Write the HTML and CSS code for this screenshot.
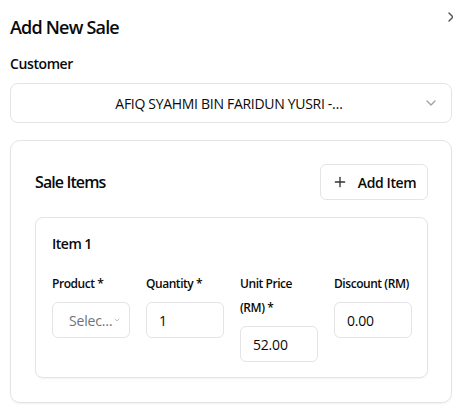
FILE: index.html
```html
<!DOCTYPE html>
<html>
<head>
<meta charset="utf-8">
<link rel="stylesheet" href="styles.css">
</head>
<body>
<div class="dialog">
  <button class="close" aria-label="Close">
    <svg width="16" height="16" viewBox="0 0 24 24" fill="none" stroke="currentColor" stroke-width="2" stroke-linecap="round" stroke-linejoin="round"><path d="M18 6 6 18"/><path d="m6 6 12 12"/></svg>
  </button>
  <h2 class="title">Add New Sale</h2>
  <div class="field">
    <label class="label">Customer</label>
    <div class="select customer">
      <span class="select-value">AFIQ SYAHMI BIN FARIDUN YUSRI -…</span>
      <svg class="chev" width="16" height="16" viewBox="0 0 24 24" fill="none" stroke="currentColor" stroke-width="2" stroke-linecap="round" stroke-linejoin="round"><path d="m6 9 6 6 6-6"/></svg>
    </div>
  </div>
  <div class="card">
    <div class="card-head">
      <h3 class="card-title">Sale Items</h3>
      <button class="btn">
        <svg width="16" height="16" viewBox="0 0 24 24" fill="none" stroke="currentColor" stroke-width="2" stroke-linecap="round" stroke-linejoin="round"><path d="M5 12h14"/><path d="M12 5v14"/></svg>
        <span>Add Item</span>
      </button>
    </div>
    <div class="item">
      <h4 class="item-title">Item 1</h4>
      <div class="grid">
        <div class="col">
          <label class="flabel">Product *</label>
          <div class="input small-select">
            <span class="ph">Selec…</span>
            <svg class="mini-chev" width="8" height="8" viewBox="0 0 24 24" fill="none" stroke="currentColor" stroke-width="2" stroke-linecap="round" stroke-linejoin="round"><path d="m6 9 6 6 6-6"/></svg>
          </div>
        </div>
        <div class="col">
          <label class="flabel">Quantity *</label>
          <div class="input">1</div>
        </div>
        <div class="col">
          <label class="flabel">Unit Price (RM) *</label>
          <div class="input">52.00</div>
        </div>
        <div class="col">
          <label class="flabel nowrap">Discount (RM)</label>
          <div class="input">0.00</div>
        </div>
      </div>
    </div>
  </div>
</div>
</body>
</html>
```

FILE: styles.css
```css
* { box-sizing: border-box; }
html, body { margin: 0; padding: 0; background: #fff; overflow: hidden; }
body {
  font-family: "Open Sans", "Noto Sans", sans-serif;
  color: #0a0a0a;
  width: 453px;
  height: 405px;
}
.dialog {
  position: relative;
  padding: 13px 0 0 10px;
  width: 452px;
}
.close {
  position: absolute;
  left: 445px;
  top: 9px;
  border: 0;
  padding: 0;
  background: none;
  color: #555;
  width: 16px;
  height: 16px;
  display: block;
}
.close svg { display: block; }
.title {
  margin: 0;
  font-size: 18px;
  line-height: 28px;
  font-weight: 600;
  letter-spacing: -0.8px;
}
.field { margin-top: 13px; }
.label {
  display: block;
  font-size: 14px;
  line-height: 20px;
  font-weight: 600;
  letter-spacing: -0.4px;
}
.select {
  margin-top: 9px;
  height: 40px;
  border: 1px solid #e4e4e7;
  border-radius: 8px;
  display: flex;
  align-items: center;
  padding: 0 12px;
  font-size: 14px;
}
.select-value {
  flex: 1;
  text-align: center;
  white-space: nowrap;
  letter-spacing: -0.3px;
  padding-left: 12px;
}
.chev { color: #a1a1aa; flex: none; }
.card {
  margin-top: 17px;
  border: 1px solid #e4e4e7;
  border-radius: 10px;
  padding: 23px 23px 24px 24px;
  box-shadow: 0 1px 2px rgba(0,0,0,0.06);
}
.card-head {
  display: flex;
  align-items: center;
  justify-content: space-between;
  height: 36px;
}
.card-title {
  margin: 0;
  font-size: 16px;
  font-weight: 600;
  letter-spacing: -0.9px;
}
.btn {
  height: 36px;
  width: 108px;
  border: 1px solid #e4e4e7;
  border-radius: 6px;
  background: #fff;
  display: flex;
  align-items: center;
  justify-content: center;
  gap: 10px;
  font-family: inherit;
  font-size: 14px;
  font-weight: 600;
  letter-spacing: -0.4px;
  color: #0a0a0a;
  padding: 0;
}
.btn svg { color: #333; }
.item {
  margin-top: 17px;
  border: 1px solid #e4e4e7;
  border-radius: 8px;
  padding: 16px 16px 15px 16px;
  box-shadow: 0 1px 2px rgba(0,0,0,0.05);
}
.item-title {
  margin: 0;
  font-size: 14px;
  line-height: 20px;
  font-weight: 600;
  letter-spacing: -0.5px;
}
.grid {
  margin-top: 18px;
  display: grid;
  grid-template-columns: repeat(4, 78px);
  column-gap: 16px;
  align-items: start;
}
.col { display: flex; flex-direction: column; gap: 6px; }
.flabel {
  font-size: 12px;
  line-height: 24px;
  font-weight: 600;
  letter-spacing: -0.45px;
}
.nowrap { white-space: nowrap; }
.input {
  height: 36px;
  border: 1px solid #e4e4e7;
  border-radius: 6px;
  display: flex;
  align-items: center;
  padding: 0 12px;
  font-size: 14px;
  letter-spacing: -0.2px;
}
.small-select {
  padding: 0 12px 0 16px;
  gap: 1px;
}
.ph { color: #71717a; white-space: nowrap; }
.mini-chev { color: #a1a1aa; flex: none; }
```
